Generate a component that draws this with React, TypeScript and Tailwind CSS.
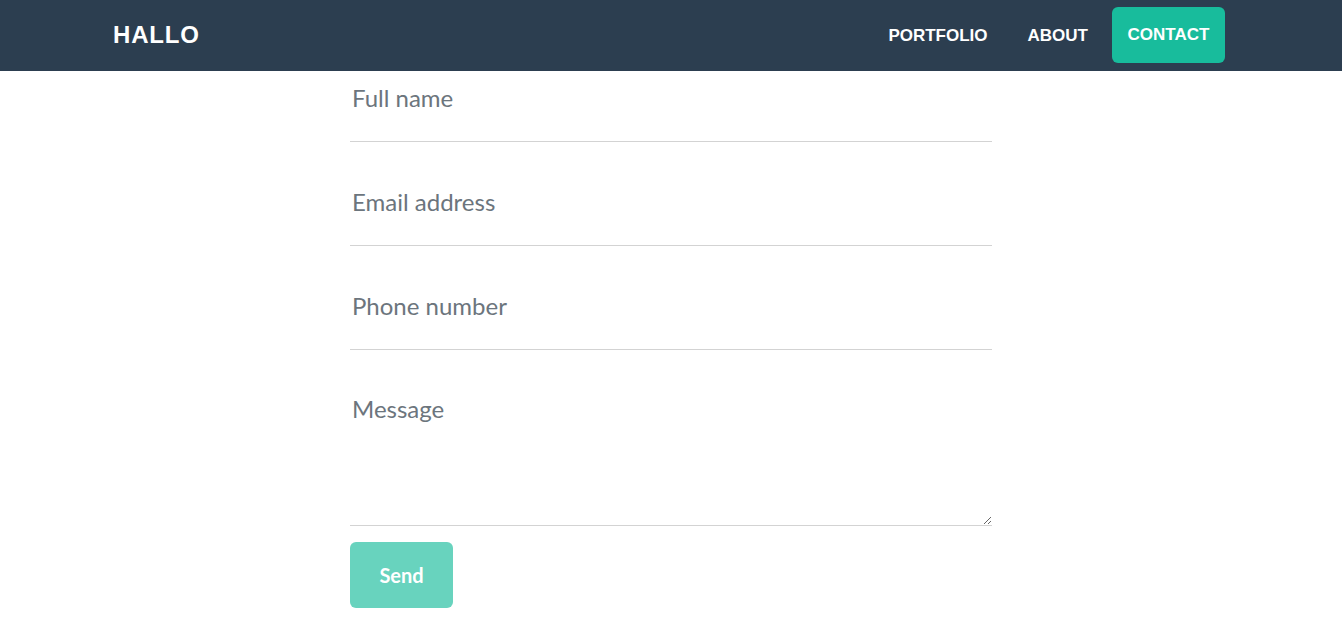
import React from "react";

const navFont = { fontFamily: '"Liberation Sans", Arial, sans-serif' };

const Field = ({ placeholder, first }: { placeholder: string; first?: boolean }) => (
	<div
		className={`border-b border-[#d3d3d3] pb-[22px] ${first ? "pt-[4px]" : "pt-[37px]"}`}
	>
		<input
			type="text"
			placeholder={placeholder}
			className="block h-[44px] w-full bg-transparent px-[2px] py-0 text-[24px] text-[#495057] outline-none placeholder:text-[#6c757d]"
		/>
	</div>
);

const App = () => {
	return (
		<div className="min-h-screen bg-white" style={{ fontFamily: 'Lato, "Open Sans", sans-serif' }}>
			<nav className="h-[71px] bg-[#2c3e50]">
				<div className="mx-auto flex h-full w-[1140px] items-center justify-between pl-3 pr-[16px]">
					<a href="#" className="mb-[1px] text-[24px] font-bold tracking-[0.8px] text-white" style={navFont}>
						HALLO
					</a>
					<ul className="flex items-center gap-2" style={navFont}>
						<li>
							<a href="#" className="block px-4 py-4 text-[17px] font-bold text-white">
								PORTFOLIO
							</a>
						</li>
						<li>
							<a href="#" className="block px-4 py-4 text-[17px] font-bold text-white">
								ABOUT
							</a>
						</li>
						<li>
							<a
								href="#"
								className="mb-[1px] flex h-[56px] w-[113px] items-center justify-center rounded-[6px] bg-[#18bc9c] text-[17px] font-bold text-white"
							>
								CONTACT
							</a>
						</li>
					</ul>
				</div>
			</nav>

			<form className="mx-auto w-[642px]">
				<Field placeholder="Full name" first />
				<Field placeholder="Email address" />
				<Field placeholder="Phone number" />
				<div className="border-b border-[#d3d3d3] pt-[37px]">
					<textarea
						placeholder="Message"
						className="block h-[138px] w-full bg-transparent px-[2px] py-0 text-[24px] leading-[44px] text-[#495057] outline-none placeholder:text-[#6c757d]"
					/>
				</div>
				<button
					type="button"
					disabled
					className="mt-[16px] h-[66px] w-[103px] rounded-[6px] bg-[#18bc9c] text-[20px] font-bold text-white opacity-65"
				>
					Send
				</button>
			</form>
		</div>
	);
};

export default App;
